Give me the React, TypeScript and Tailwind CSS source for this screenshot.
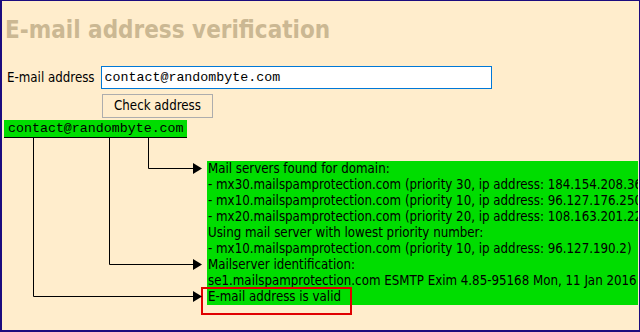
import React from "react";

const sans = "font-['DejaVu_Sans_Condensed','Liberation_Sans',sans-serif]";
const mono = "font-['Liberation_Mono','Courier_New',monospace]";

const lines = [
  "Mail servers found for domain:",
  "- mx30.mailspamprotection.com (priority 30, ip address: 184.154.208.36)",
  "- mx10.mailspamprotection.com (priority 10, ip address: 96.127.176.250)",
  "- mx20.mailspamprotection.com (priority 20, ip address: 108.163.201.22)",
  "Using mail server with lowest priority number:",
  "- mx10.mailspamprotection.com (priority 10, ip address: 96.127.190.2)",
  "Mailserver identification:",
  "se1.mailspamprotection.com ESMTP Exim 4.85-95168 Mon, 11 Jan 2016 04:12:31 -0600",
  "E-mail address is valid",
];

function Connectors() {
  const arrows = [
    { x: 148.5, y: 168.5 },
    { x: 109.5, y: 264.5 },
    { x: 33.5, y: 296.5 },
  ];
  return (
    <svg
      className="absolute -left-[2px] -top-[1px] pointer-events-none"
      width={640}
      height={332}
    >
      {arrows.map((a) => (
        <g key={a.x}>
          <polyline
            points={`${a.x},137 ${a.x},${a.y} 194,${a.y}`}
            fill="none"
            stroke="#000"
            strokeWidth={1}
          />
          <polygon points={`193,${a.y - 5.5} 202,${a.y} 193,${a.y + 5.5}`} fill="#000" />
        </g>
      ))}
    </svg>
  );
}

export default function App() {
  return (
    <div className="w-[640px] h-[332px] bg-[#ffedcc] border-t border-l-2 border-r border-b-2 border-[#1b0b7e] overflow-hidden">
      <div className={`relative h-full pt-[15px] ${sans} text-black`}>
        <h1 className="ml-[3px] text-[24px] leading-[28px] font-bold text-[#cbb893]">
          E-mail address verification
        </h1>

        <div className="mt-[22px] flex items-center">
          <label className="ml-[5px] text-[13.2px]">E-mail address</label>
          <input
            type="text"
            defaultValue="contact@randombyte.com"
            className={`ml-[6px] w-[391px] h-[23px] border border-[#0078d7] bg-white px-[3px] text-[13.3px] ${mono} outline-none`}
          />
        </div>

        <button className="mt-[5px] ml-[100px] block w-[111px] h-[24px] border border-[#adadad] text-[13.2px]">
          Check address
        </button>

        <div
          className={`mt-[2px] ml-[2px] w-[183px] h-[18px] bg-[#00dd00] border-b border-black px-[4px] text-[13.3px] leading-[17px] ${mono}`}
        >
          contact@randombyte.com
        </div>

        <div className="relative mt-[23px] ml-[205px] w-[431px] bg-[#00dd00] text-[13.2px] leading-[16px] whitespace-nowrap">
          <div className="overflow-hidden">
            {lines.map((l) => (
              <div key={l} className="pl-[1px]">
                {l}
              </div>
            ))}
          </div>
          <div className="absolute left-[-6px] top-[126px] w-[151px] h-[28px] border-2 border-[#e00000]" />
        </div>

        <Connectors />
      </div>
    </div>
  );
}
